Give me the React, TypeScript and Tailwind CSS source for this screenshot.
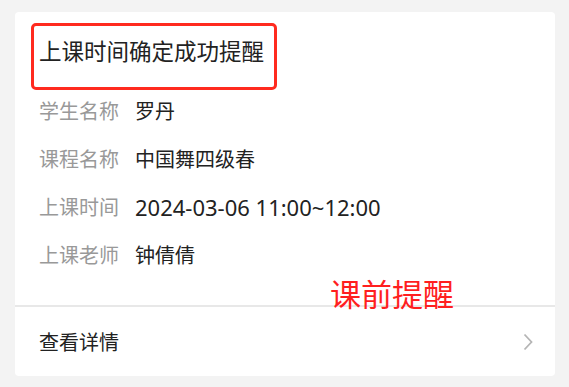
import React from "react";

const rows = [
  { label: "学生名称", value: "罗丹", latin: false },
  { label: "课程名称", value: "中国舞四级春", latin: false },
  { label: "上课时间", value: "2024-03-06 11:00~12:00", latin: true },
  { label: "上课老师", value: "钟倩倩", latin: false },
];

export default function App() {
  return (
    <div
      className="w-[569px] h-[387px] bg-[#f3f3f3] pt-[12px] pl-[15px]"
      style={{ fontFamily: '"Noto Sans CJK SC", "Noto Sans", sans-serif' }}
    >
      <div className="relative w-[540px] h-[364px] bg-white rounded-[4px] flex flex-col">
        <div className="ml-[16px] mt-[11px] w-[246px] h-[67px] border-[3px] border-[#ff2a1f] rounded-[5px] flex items-start pt-[13px] pl-[5px]">
          <span className="text-[22.5px] leading-none text-[#222]">上课时间确定成功提醒</span>
        </div>
        <div className="flex flex-col gap-[20px] mt-[7px] pl-[24px]">
          {rows.map((r) => (
            <div key={r.label} className="h-[28px] flex items-center text-[20px] leading-none">
              <span className="w-[96px] text-[#999]">{r.label}</span>
              {r.latin ? (
                <span className="text-[#222] text-[22px] font-['Noto_Sans',sans-serif]">{r.value}</span>
              ) : (
                <span className="text-[#222]">{r.value}</span>
              )}
            </div>
          ))}
        </div>
        <div className="mt-[36px] h-[2px] bg-[#e8e8e8]" />
        <div className="h-[69px] flex items-center justify-between pl-[24px] pr-[22px]">
          <span className="text-[20px] leading-none text-[#222]">查看详情</span>
          <svg width="10" height="18" viewBox="0 0 10 18" fill="none">
            <path d="M1.5 1.5 L8.5 9 L1.5 16.5" stroke="#b5b5b5" strokeWidth="1.8" />
          </svg>
        </div>
        <span className="absolute left-[315px] top-[265px] text-[31px] leading-none text-[#ff1f1f]">
          课前提醒
        </span>
      </div>
    </div>
  );
}
